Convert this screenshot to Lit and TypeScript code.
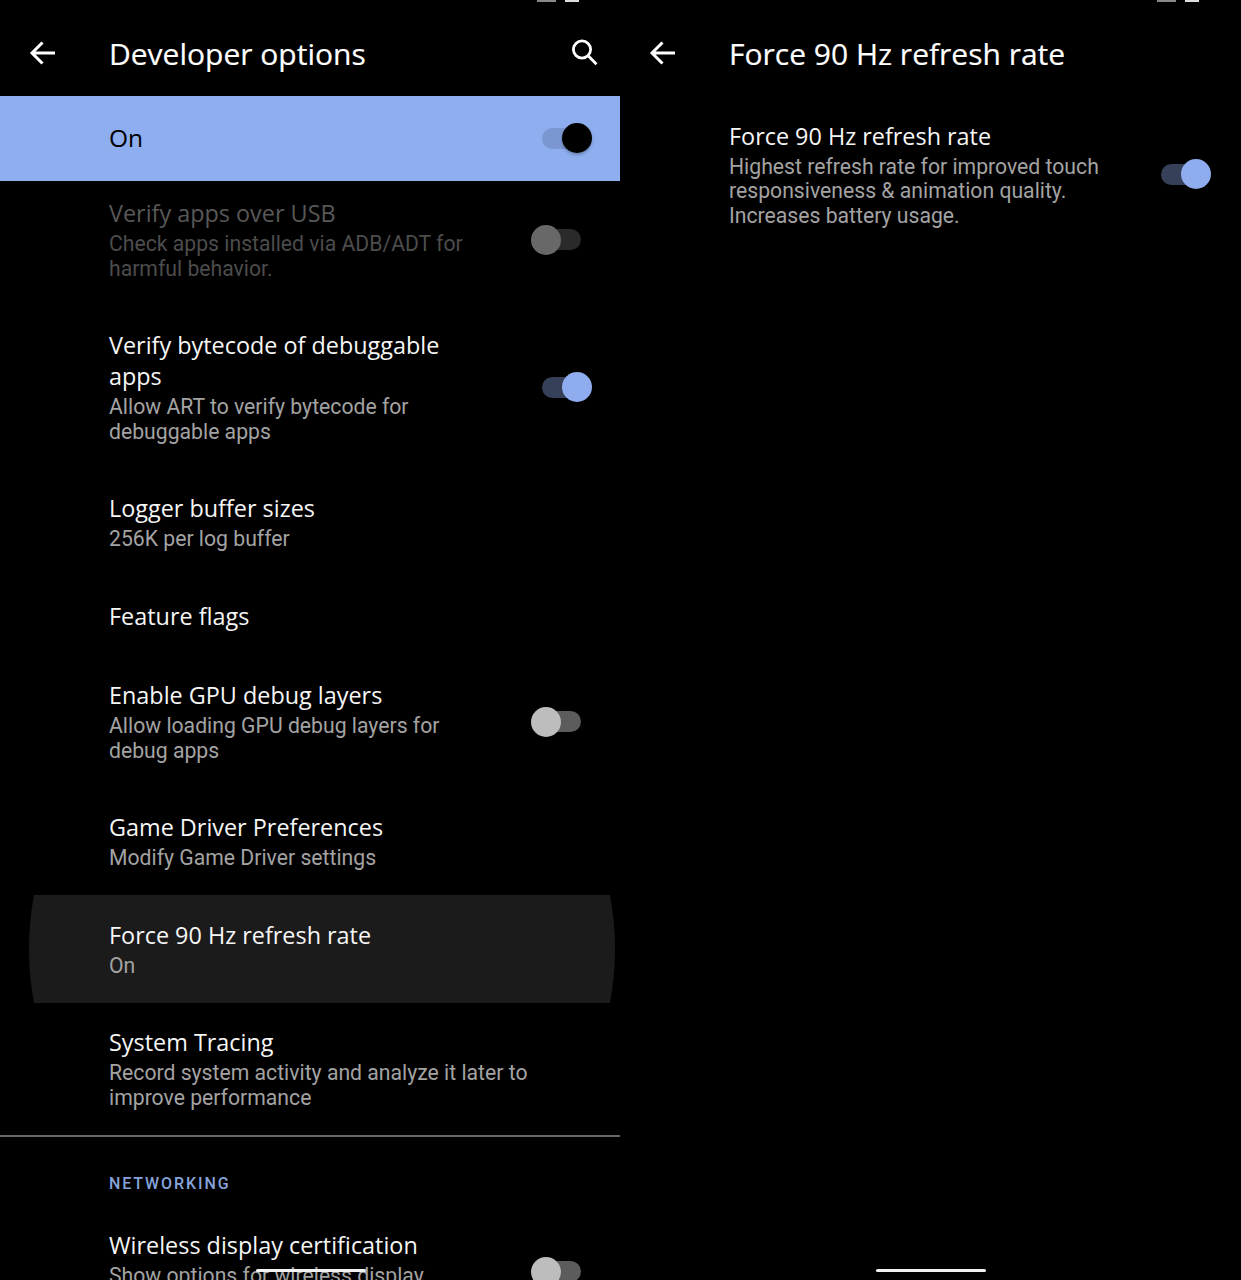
import { LitElement, html, css, nothing } from "lit";
import { customElement } from "lit/decorators.js";

type Sw = "on" | "off" | "disabled";
interface Row {
  title: string;
  sub?: string;
  sw?: Sw;
  disabled?: boolean;
  pressed?: boolean;
  first?: boolean;
}

const ROWS: Row[] = [
  { title: "Verify apps over USB", sub: "Check apps installed via ADB/ADT for harmful behavior.", sw: "disabled", disabled: true, first: true },
  { title: "Verify bytecode of debuggable apps", sub: "Allow ART to verify bytecode for debuggable apps", sw: "on" },
  { title: "Logger buffer sizes", sub: "256K per log buffer" },
  { title: "Feature flags" },
  { title: "Enable GPU debug layers", sub: "Allow loading GPU debug layers for debug apps", sw: "off" },
  { title: "Game Driver Preferences", sub: "Modify Game Driver settings" },
  { title: "Force 90 Hz refresh rate", sub: "On", pressed: true },
  { title: "System Tracing", sub: "Record system activity and analyze it later to improve performance" },
];

const back = html`<svg class="icon" viewBox="0 0 28 28" fill="none" stroke="#fff" stroke-width="3">
  <path d="M13.5 2.5 3 13 13.5 23.5M3 13H26" />
</svg>`;
const search = html`<svg class="icon search" viewBox="0 0 28 28" fill="none" stroke="#fff" stroke-width="2.8">
  <circle cx="12" cy="10.5" r="8.6" /><path d="M18.4 17 26.5 25.3" />
</svg>`;

@customElement("app-root")
export class AppRoot extends LitElement {
  static styles = css`
    :host {
      display: flex;
      width: 1241px;
      height: 1280px;
      background: #000;
      overflow: hidden;
      font-family: Roboto, "Liberation Sans", sans-serif;
      color: #fff;
    }
    .pane {
      position: relative;
      height: 1280px;
      overflow: hidden;
      flex: none;
    }
    .left { width: 620px; }
    .right { width: 621px; }
    .status {
      position: absolute;
      top: 0;
      left: 537px;
      display: flex;
      gap: 9px;
    }
    .status i { display: block; height: 1.5px; width: 19px; background: #888; }
    .status i + i { width: 14px; background: #ddd; }
    .handle {
      position: absolute;
      top: 1269px;
      left: 256px;
      width: 110px;
      height: 3px;
      border-radius: 2px;
      background: #f2f2f2;
    }
    header {
      display: flex;
      align-items: center;
      height: 96px;
      padding: 12px 22px 0 29px;
      box-sizing: border-box;
    }
    .icon { width: 28px; height: 28px; flex: none; }
    .search { margin-top: -2px; }
    h1 {
      margin: 0 0 0 52px;
      flex: 1;
      font-family: "Open Sans", Roboto, sans-serif;
      font-weight: 400;
      font-size: 30px;
      line-height: 36px;
      white-space: nowrap;
      color: #fff;
      -webkit-text-stroke: 0.2px #fff;
    }
    .bar {
      display: flex;
      align-items: center;
      justify-content: space-between;
      height: 85px;
      box-sizing: border-box;
      padding: 0 28px 1px 109px;
      background: #8eaeef;
      color: #000;
      font-family: "Open Sans", Roboto, sans-serif;
      font-size: 24.5px;
    }
    .bar span { margin-bottom: 2px; }
    .row {
      position: relative;
      overflow: hidden;
      display: flex;
      align-items: center;
      gap: 41px;
      padding: 24.5px 28px 24.2px 109px;
    }
    .row.first { padding-top: 17px; }
    .row.pressed::before {
      content: "";
      position: absolute;
      left: 29px;
      top: 50%;
      width: 586px;
      height: 586px;
      border-radius: 50%;
      background: #1b1b1b;
      transform: translateY(-50%);
    }
    .text { position: relative; flex: 1; min-width: 0; }
    .title {
      font-family: "Open Sans", Roboto, sans-serif;
      font-size: 23.4px;
      line-height: 31px;
      color: #f6f6f6;
    }
    .sub {
      margin-top: 3px;
      font-size: 21.2px;
      line-height: 24.7px;
      color: #a3a3a3;
    }
    .disabled .title { color: #585858; }
    .disabled .sub { color: #4c4c4c; }
    .sw {
      position: relative;
      flex: none;
      width: 61px;
      height: 30px;
    }
    .track {
      position: absolute;
      top: 4.5px;
      width: 48px;
      height: 21px;
      border-radius: 11px;
    }
    .thumb {
      position: absolute;
      top: 0;
      width: 30px;
      height: 30px;
      border-radius: 50%;
    }
    .sw.on .track { left: 11px; background: #364058; }
    .sw.on .thumb { left: 31px; background: #8fadee; }
    .sw.off .track { left: 2px; background: #5c5c5c; }
    .sw.off .thumb { left: 0; background: #bdbdbd; }
    .sw.disabled .track { left: 2px; background: #2a2a2a; }
    .sw.disabled .thumb { left: 0; background: #686868; }
    .bar .sw.on .track { background: #7b97d2; }
    .bar .sw.on .thumb { background: #000; box-shadow: 0 2px 3px rgba(0, 0, 0, 0.25); }
    .divider { height: 2px; background: #666; }
    .cat {
      padding: 38.5px 0 12.5px 109px;
      font-size: 16px;
      line-height: 18px;
      font-weight: 500;
      letter-spacing: 1.9px;
      color: #86a3db;
    }
    .right .row { padding-right: 30px; }
    .right .sw { margin-top: -1px; }
  `;

  private sw(s: Sw) {
    return html`<div class="sw ${s}"><div class="track"></div><div class="thumb"></div></div>`;
  }

  private row(r: Row) {
    const cls = ["row", r.first ? "first" : "", r.disabled ? "disabled" : "", r.pressed ? "pressed" : ""].join(" ");
    return html`<div class=${cls}>
      <div class="text">
        <div class="title">${r.title}</div>
        ${r.sub ? html`<div class="sub">${r.sub}</div>` : nothing}
      </div>
      ${r.sw ? this.sw(r.sw) : nothing}
    </div>`;
  }

  render() {
    return html`
      <section class="pane left">
        <div class="status"><i></i><i></i></div>
        <header>${back}<h1>Developer options</h1>${search}</header>
        <div class="bar"><span>On</span>${this.sw("on")}</div>
        ${ROWS.map((r) => this.row(r))}
        <div class="divider"></div>
        <div class="cat">NETWORKING</div>
        ${this.row({ title: "Wireless display certification", sub: "Show options for wireless display certification", sw: "off" })}
        <div class="handle"></div>
      </section>
      <section class="pane right">
        <div class="status"><i></i><i></i></div>
        <header>${back}<h1>Force 90 Hz refresh rate</h1></header>
        ${this.row({
          title: "Force 90 Hz refresh rate",
          sub: "Highest refresh rate for improved touch responsiveness & animation quality. Increases battery usage.",
          sw: "on",
        })}
        <div class="handle"></div>
      </section>
    `;
  }
}
